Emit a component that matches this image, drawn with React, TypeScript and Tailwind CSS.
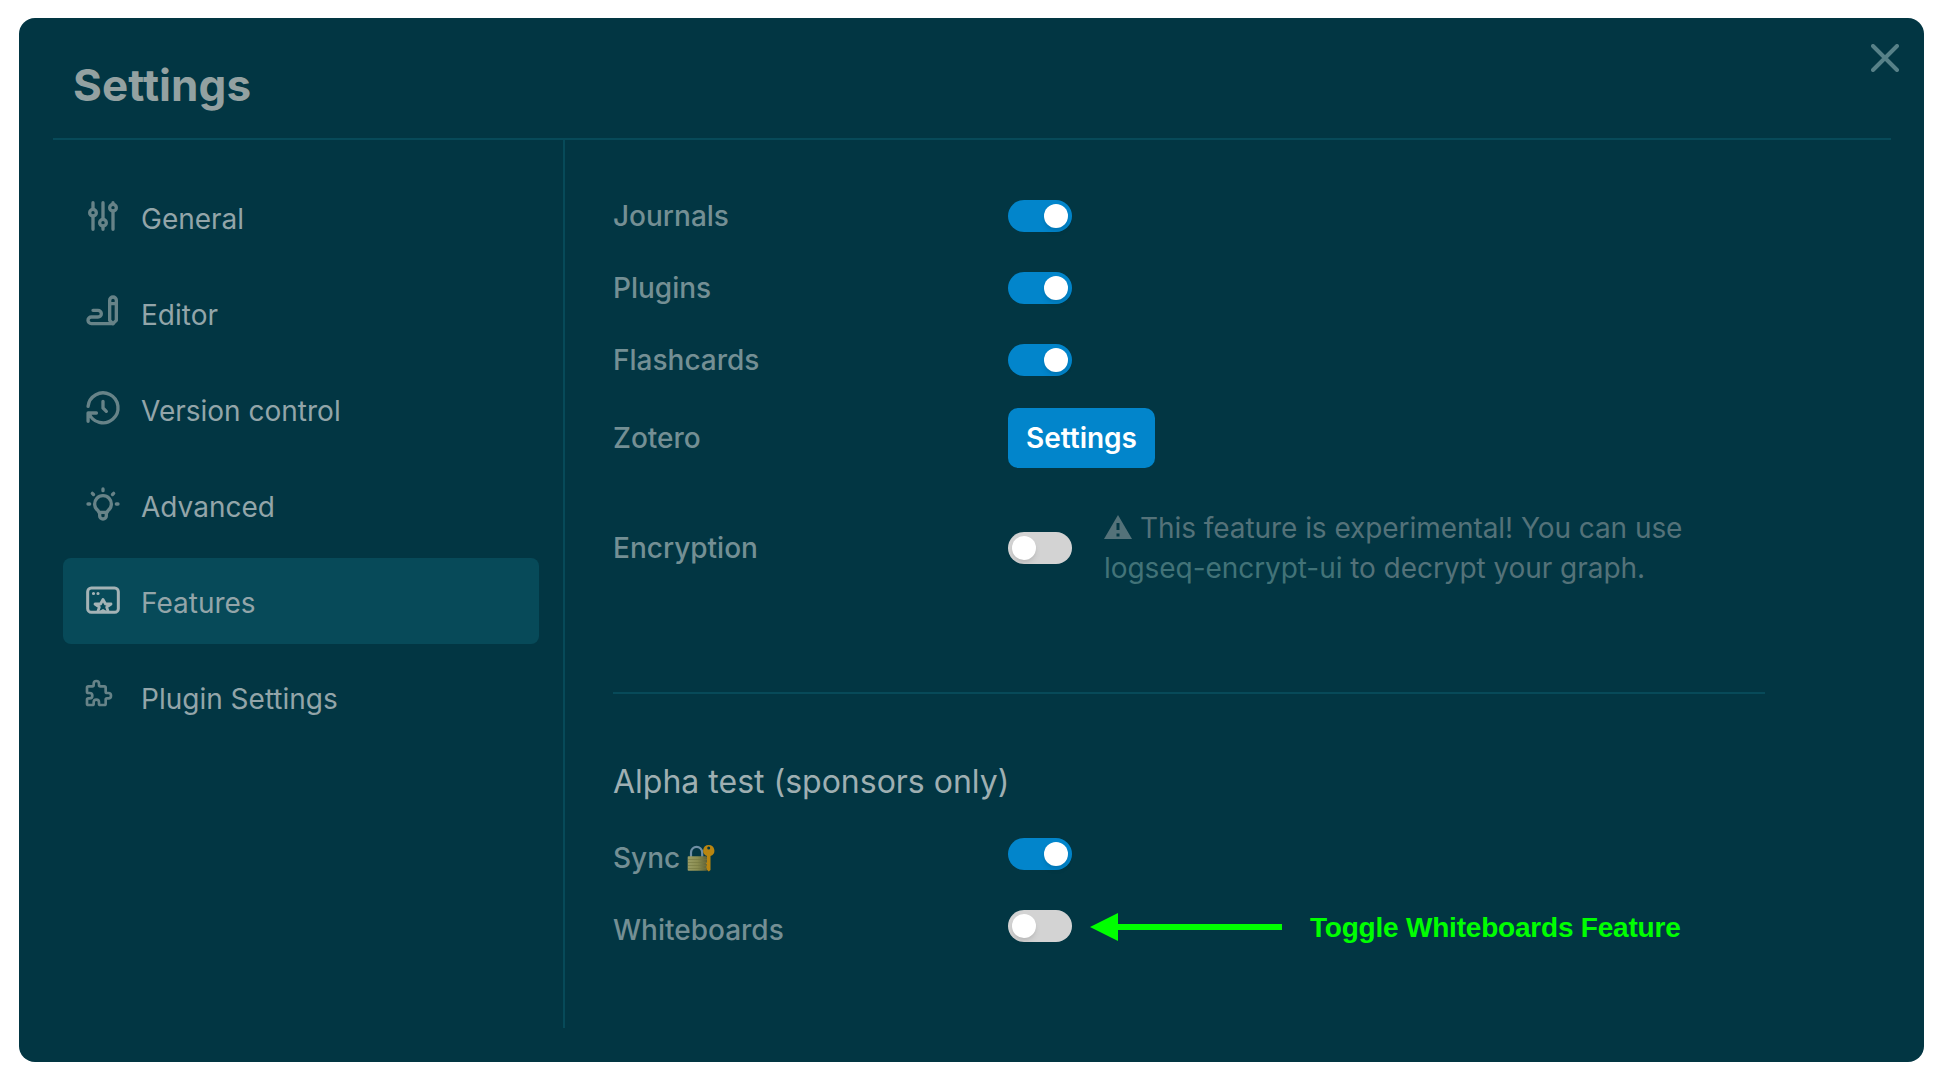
import type { ReactNode } from "react";

const strokeProps = {
  viewBox: "0 0 24 24",
  fill: "none",
  stroke: "currentColor",
  strokeWidth: 2,
  strokeLinecap: "round" as const,
  strokeLinejoin: "round" as const,
};

function Icon({ children, small }: { children: ReactNode; small?: boolean }) {
  return (
    <svg {...strokeProps} className={small ? "size-8 shrink-0" : "size-10 shrink-0"}>
      {children}
    </svg>
  );
}

const navItems: { label: string; icon: ReactNode; active?: boolean }[] = [
  {
    label: "General",
    icon: (
      <Icon>
        <circle cx="6" cy="10" r="2" />
        <path d="M6 4v4M6 12v8" />
        <circle cx="12" cy="16" r="2" />
        <path d="M12 4v10M12 18v2" />
        <circle cx="18" cy="7" r="2" />
        <path d="M18 4v1M18 9v11" />
      </Icon>
    ),
  },
  {
    label: "Editor",
    icon: (
      <Icon>
        <path d="M20 17v-12c0 -1.121 -.879 -2 -2 -2s-2 .879 -2 2v12l2 2l2 -2z" />
        <path d="M16 7h4" />
        <path d="M18 19h-13a2 2 0 1 1 0 -4h4a2 2 0 1 0 0 -4h-3" />
      </Icon>
    ),
  },
  {
    label: "Version control",
    icon: (
      <Icon>
        <path d="M12 8v4l2 2" />
        <path d="M3.05 11a9 9 0 1 1 .5 4m-.5 5v-5h5" />
      </Icon>
    ),
  },
  {
    label: "Advanced",
    icon: (
      <Icon>
        <path d="M3 12h1m8 -9v1m8 8h1m-15.4 -6.4l.7 .7m12.1 -.7l-.7 .7" />
        <path d="M9 16a5 5 0 1 1 6 0a3.5 3.5 0 0 0 -1 3a2 2 0 0 1 -4 0a3.5 3.5 0 0 0 -1 -3" />
        <path d="M9.7 17h4.6" />
      </Icon>
    ),
  },
  {
    label: "Features",
    active: true,
    icon: (
      <Icon>
        <rect x="2.8" y="4.8" width="18.4" height="14.6" rx="2.2" strokeWidth="1.8" />
        <path d="M6.3 8.1h.01M9 8.1h.01" strokeWidth="1.9" />
        <path d="M8.9 19l.9-2.7l-2.6-1.9h3.3l1.5-2.7l1.5 2.7h3.300l-2.6 1.900l.9 2.700" strokeWidth="1.7" />
        <path d="M10.400 19L12 18.100l1.600 .900" strokeWidth="1.3" />
      </Icon>
    ),
  },
  {
    label: "Plugin Settings",
    icon: (
      <Icon small>
        <path d="M4 7h3a1 1 0 0 0 1 -1v-1a2 2 0 0 1 4 0v1a1 1 0 0 0 1 1h3a1 1 0 0 1 1 1v3a1 1 0 0 0 1 1h1a2 2 0 0 1 0 4h-1a1 1 0 0 0 -1 1v3a1 1 0 0 1 -1 1h-3a1 1 0 0 1 -1 -1v-1a2 2 0 0 0 -4 0v1a1 1 0 0 1 -1 1h-3a1 1 0 0 1 -1 -1v-3a1 1 0 0 1 1 -1h1a2 2 0 0 0 0 -4h-1a1 1 0 0 1 -1 -1v-3a1 1 0 0 1 1 -1" />
      </Icon>
    ),
  },
];

function Toggle({ on }: { on?: boolean }) {
  return (
    <span
      className={
        on
          ? "flex h-8 w-16 shrink-0 items-center justify-end rounded-full bg-[#0285cb] p-1"
          : "flex h-8 w-16 shrink-0 items-center justify-start rounded-full bg-[#d3d3d3] p-1"
      }
    >
      <span className="size-6 rounded-full bg-white shadow-md" />
    </span>
  );
}

function Label({ children }: { children: ReactNode }) {
  return <span className="flex w-[395px] shrink-0 items-center font-medium text-[#748f94]">{children}</span>;
}

function LockWithKey() {
  return (
    <svg viewBox="0 0 28 28" className="ml-[7px] size-7">
      <defs>
        <linearGradient id="lock-body" x1="0" x2="1" y1="0" y2="0">
          <stop offset="0" stopColor="#9a9d66" />
          <stop offset="0.5" stopColor="#8b8d50" />
          <stop offset="1" stopColor="#5f6136" />
        </linearGradient>
      </defs>
      <path d="M4 13V8.500a5.600 5.600 0 0 1 11.200 0V13" fill="none" stroke="#6f8fa5" strokeWidth="2.200" />
      <rect x="0.700" y="12.300" width="19.300" height="14.400" rx="0.800" fill="url(#lock-body)" />
      <path d="M1 15.500h19M1 18.500h19M1 21.500h19M1 24.500h19" stroke="#74773f" strokeWidth="0.600" />
      <path
        fillRule="evenodd"
        d="M21.700 0.900a5.700 5.700 0 0 1 1.800 11.100V26l-1.700 1.500L20 26v-2l-1.300-1l1.300-1v-1.500l-1.300-1l1.300-1V12A5.700 5.700 0 0 1 21.700 0.900zM21.700 2.600a1.500 1.500 0 1 0 0 3a1.500 1.500 0 1 0 0-3z"
        fill="#b98510"
      />
    </svg>
  );
}

export default function App() {
  return (
    <div className="h-[1080px] w-[1946px] bg-white pt-[18px] pl-[19px] font-['Inter',sans-serif] text-[28px] leading-10">
      <div className="flex h-[1044px] w-[1905px] flex-col rounded-2xl bg-[#023643] px-[34px] pb-[34px]">
        <header className="flex h-[122px] w-[1838px] shrink-0 items-start justify-between border-b-2 border-[#074a59]">
          <h1 className="pt-[41px] pl-5 text-[44px] leading-[52px] font-bold tracking-[0.1px] text-[#93a1a1]">Settings</h1>
          <svg viewBox="0 0 28 28" className="mt-[26px] -mr-2 size-7" fill="none" stroke="#578188" strokeWidth="4" strokeLinecap="round">
            <path d="M2 2l24 24M26 2L2 26" />
          </svg>
        </header>
        <div className="flex grow">
          <nav className="flex w-[512px] shrink-0 flex-col gap-2.5 border-r-2 border-[#074a59] pt-[34px] pr-6 pl-2.5">
            {navItems.map((item) => (
              <a
                key={item.label}
                className={
                  item.active
                    ? "flex h-[86px] items-center rounded-lg bg-[#074a59] pl-5"
                    : "flex h-[86px] items-center rounded-lg pl-5"
                }
              >
                <span
                  className={
                    item.active
                      ? "mb-0.5 flex w-[58px] items-center text-[#a4b3b6]"
                      : item.label === "Plugin Settings"
                        ? "mb-[9px] flex w-[58px] items-center text-[#678388]"
                        : "mb-0.5 flex w-[58px] items-center text-[#678388]"
                  }
                >
                  {item.icon}
                </span>
                <span className="mt-1 text-[#93a5a9]">{item.label}</span>
              </a>
            ))}
          </nav>
          <main className="flex w-[1200px] flex-col pl-12">
            <div className="mt-14 flex h-10 items-center">
              <Label>Journals</Label>
              <Toggle on />
            </div>
            <div className="mt-8 flex h-10 items-center">
              <Label>Plugins</Label>
              <Toggle on />
            </div>
            <div className="mt-8 flex h-10 items-center">
              <Label>Flashcards</Label>
              <Toggle on />
            </div>
            <div className="mt-7 flex h-[60px] items-center">
              <Label>Zotero</Label>
              <button className="h-[60px] w-[147px] rounded-[10px] bg-[#0285cb] font-semibold text-white">Settings</button>
            </div>
            <div className="mt-10 flex h-20 items-center">
              <Label>Encryption</Label>
              <Toggle />
              <p className="ml-8 tracking-[-0.06px] text-[#547279]">
                <svg viewBox="0 0 28 24" className="mr-2 mb-1.5 inline h-6 w-7">
                  <path d="M14 0l14 24H0z" fill="currentColor" />
                  <path d="M14 8v7M14 18.500v3" stroke="#023643" strokeWidth="3" />
                </svg>
                This feature is experimental! You can use
                <br />
                <a className="text-[#427378]">logseq-encrypt-ui</a> to decrypt your graph.
              </p>
            </div>
            <hr className="mt-[104px] border-t-2 border-[#074a59]" />
            <h2 className="mt-[68px] text-[32px] leading-10 text-[#9fafb2]">Alpha test (sponsors only)</h2>
            <div className="mt-8 flex h-10 items-center">
              <Label>
                <span className="mt-2 flex items-center">
                  Sync
                  <LockWithKey />
                </span>
              </Label>
              <Toggle on />
            </div>
            <div className="mt-8 flex h-10 items-center">
              <Label>
                <span className="mt-2">Whiteboards</span>
              </Label>
              <Toggle />
              <svg viewBox="0 0 192 28" className="mt-0.5 ml-[18px] h-7 w-48 shrink-0" fill="#00ff00">
                <path d="M0 14L28 0v11h164v6H28v11z" />
              </svg>
              <span className="mt-[3px] ml-7 font-['Liberation_Sans',sans-serif] text-[28px] font-bold tracking-[-0.21px] whitespace-nowrap text-[#00ff00]">
                Toggle Whiteboards Feature
              </span>
            </div>
          </main>
        </div>
      </div>
    </div>
  );
}
